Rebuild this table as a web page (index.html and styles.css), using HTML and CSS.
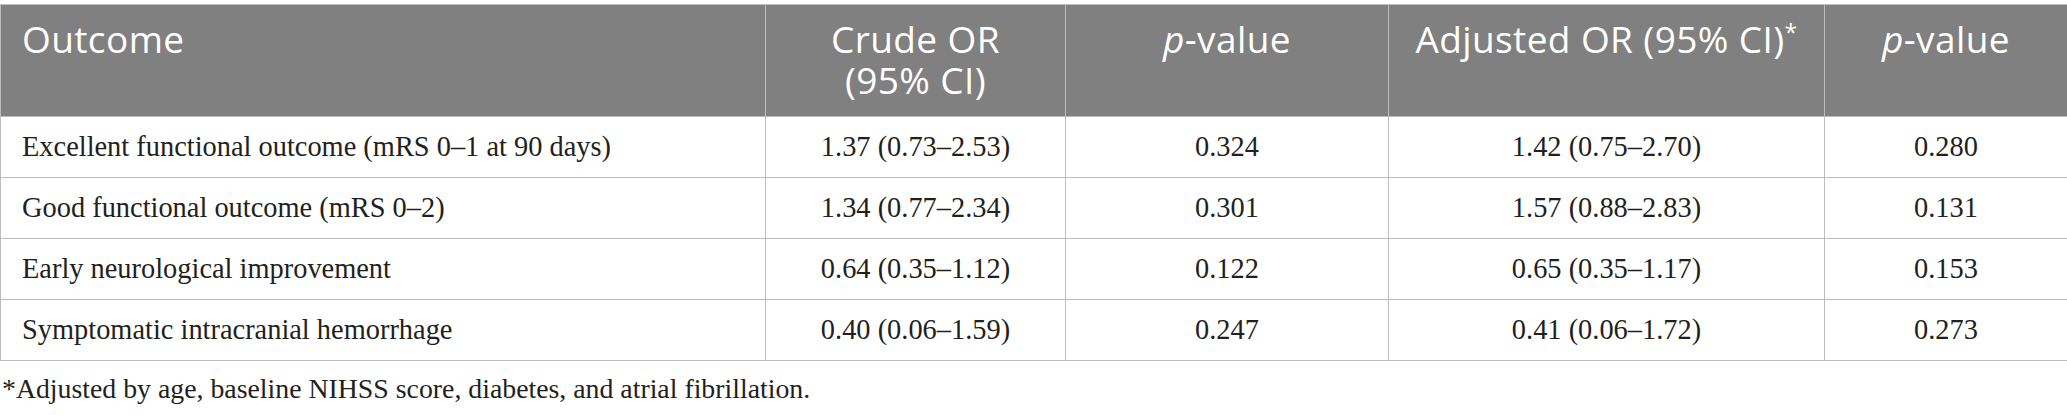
FILE: index.html
```html
<!DOCTYPE html>
<html>
<head>
<meta charset="utf-8">
<link rel="stylesheet" href="styles.css">
</head>
<body>
<div class="wrap">
<table class="results">
  <colgroup>
    <col class="c1"><col class="c2"><col class="c3"><col class="c4"><col class="c5">
  </colgroup>
  <thead>
    <tr>
      <th class="left">Outcome</th>
      <th>Crude OR<br>(95% CI)</th>
      <th><i>p</i>-value</th>
      <th>Adjusted OR (95% CI)<sup>*</sup></th>
      <th><i>p</i>-value</th>
    </tr>
  </thead>
  <tbody>
    <tr><td class="left">Excellent functional outcome (mRS 0–1 at 90 days)</td><td>1.37 (0.73–2.53)</td><td>0.324</td><td>1.42 (0.75–2.70)</td><td>0.280</td></tr>
    <tr><td class="left">Good functional outcome (mRS 0–2)</td><td>1.34 (0.77–2.34)</td><td>0.301</td><td>1.57 (0.88–2.83)</td><td>0.131</td></tr>
    <tr><td class="left">Early neurological improvement</td><td>0.64 (0.35–1.12)</td><td>0.122</td><td>0.65 (0.35–1.17)</td><td>0.153</td></tr>
    <tr><td class="left">Symptomatic intracranial hemorrhage</td><td>0.40 (0.06–1.59)</td><td>0.247</td><td>0.41 (0.06–1.72)</td><td>0.273</td></tr>
  </tbody>
</table>
<p class="footnote">*Adjusted by age, baseline NIHSS score, diabetes, and atrial fibrillation.</p>
</div>
</body>
</html>
```
FILE: styles.css
```css
html, body {
  margin: 0;
  padding: 0;
  background: #ffffff;
}
.wrap {
  padding-top: 4px;
}
.results {
  border-collapse: collapse;
  table-layout: fixed;
  width: 2067px;
}
.c1 { width: 765px; }
.c2 { width: 300px; }
.c3 { width: 323px; }
.c4 { width: 436px; }
.c5 { width: 243px; }
.results th {
  background: #7f807f;
  color: #ffffff;
  font-family: "Open Sans", "Noto Sans", sans-serif;
  font-weight: 400;
  font-size: 37px;
  letter-spacing: 0.4px;
  line-height: 41px;
  text-align: center;
  vertical-align: top;
  padding: 13px 10px 16px;
  height: 82px;
  border: 1px solid #bdbdbd;
}
.results th sup {
  font-size: 23px;
  line-height: 0;
  vertical-align: 12px;
}
.results th.left,
.results td.left {
  text-align: left;
  padding-left: 21px;
}
.results td {
  font-family: "Liberation Serif", "Times New Roman", serif;
  font-size: 28.4px;
  color: #231f20;
  text-align: center;
  vertical-align: middle;
  height: 60px;
  padding: 0 10px;
  border: 1px solid #bdbdbd;
}
.footnote {
  margin: 12px 0 0 2px;
  font-family: "Liberation Serif", "Times New Roman", serif;
  font-size: 27.8px;
  color: #231f20;
}
```
